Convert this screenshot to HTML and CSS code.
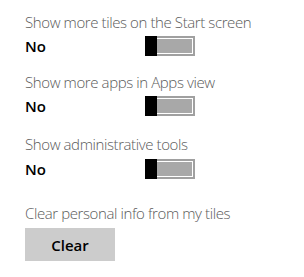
FILE: index.html
```html
<!DOCTYPE html>
<html>
<head>
<meta charset="utf-8">
<link rel="stylesheet" href="styles.css">
</head>
<body>
<div class="panel">
  <div class="section s1">
    <div class="label">Show more tiles on the Start screen</div>
    <div class="row">
      <span class="state">No</span>
      <div class="toggle"><div class="thumb"></div><div class="track"></div></div>
    </div>
  </div>
  <div class="section s2">
    <div class="label">Show more apps in Apps view</div>
    <div class="row">
      <span class="state">No</span>
      <div class="toggle"><div class="thumb"></div><div class="track"></div></div>
    </div>
  </div>
  <div class="section s3">
    <div class="label">Show administrative tools</div>
    <div class="row r3">
      <span class="state">No</span>
      <div class="toggle"><div class="thumb"></div><div class="track"></div></div>
    </div>
  </div>
  <div class="section s4">
    <div class="label">Clear personal info from my tiles</div>
    <button class="btn">Clear</button>
  </div>
</div>
</body>
</html>
```
FILE: styles.css
```css
html, body {
  margin: 0;
  padding: 0;
  background: #ffffff;
}
.panel {
  padding: 12px 0 0 25px;
  font-family: "Open Sans", "Noto Sans", sans-serif;
}
.label {
  font-size: 15px;
  font-weight: 300;
  letter-spacing: -0.4px;
  line-height: 20px;
  height: 20px;
  color: #5a5a5a;
  white-space: nowrap;
}
.s2 { margin-top: 16px; }
.s3 { margin-top: 18px; }
.s4 { margin-top: 24px; }
.row {
  display: flex;
  align-items: center;
  height: 20px;
  margin-top: 4px;
}
.r3 { margin-top: 5px; }
.state {
  width: 120px;
  font-size: 15px;
  font-weight: 600;
  color: #000;
  line-height: 20px;
}
.toggle {
  display: flex;
  width: 50px;
  height: 20px;
}
.thumb {
  width: 12px;
  height: 20px;
  background: #000;
}
.track {
  flex: 1;
  box-sizing: border-box;
  height: 20px;
  border: 2px solid #a0a0a0;
  border-left: none;
  background: #a8a8a8;
  box-shadow: inset 0 1px #fff, inset -1px 0 #fff, inset 0 -1px #fff;
}
.btn {
  display: block;
  margin-top: 5px;
  width: 90px;
  height: 33px;
  border: none;
  padding: 0;
  background: #cccccc;
  font-family: "Open Sans", "Noto Sans", sans-serif;
  font-size: 15px;
  font-weight: 600;
  color: #000;
}
```
